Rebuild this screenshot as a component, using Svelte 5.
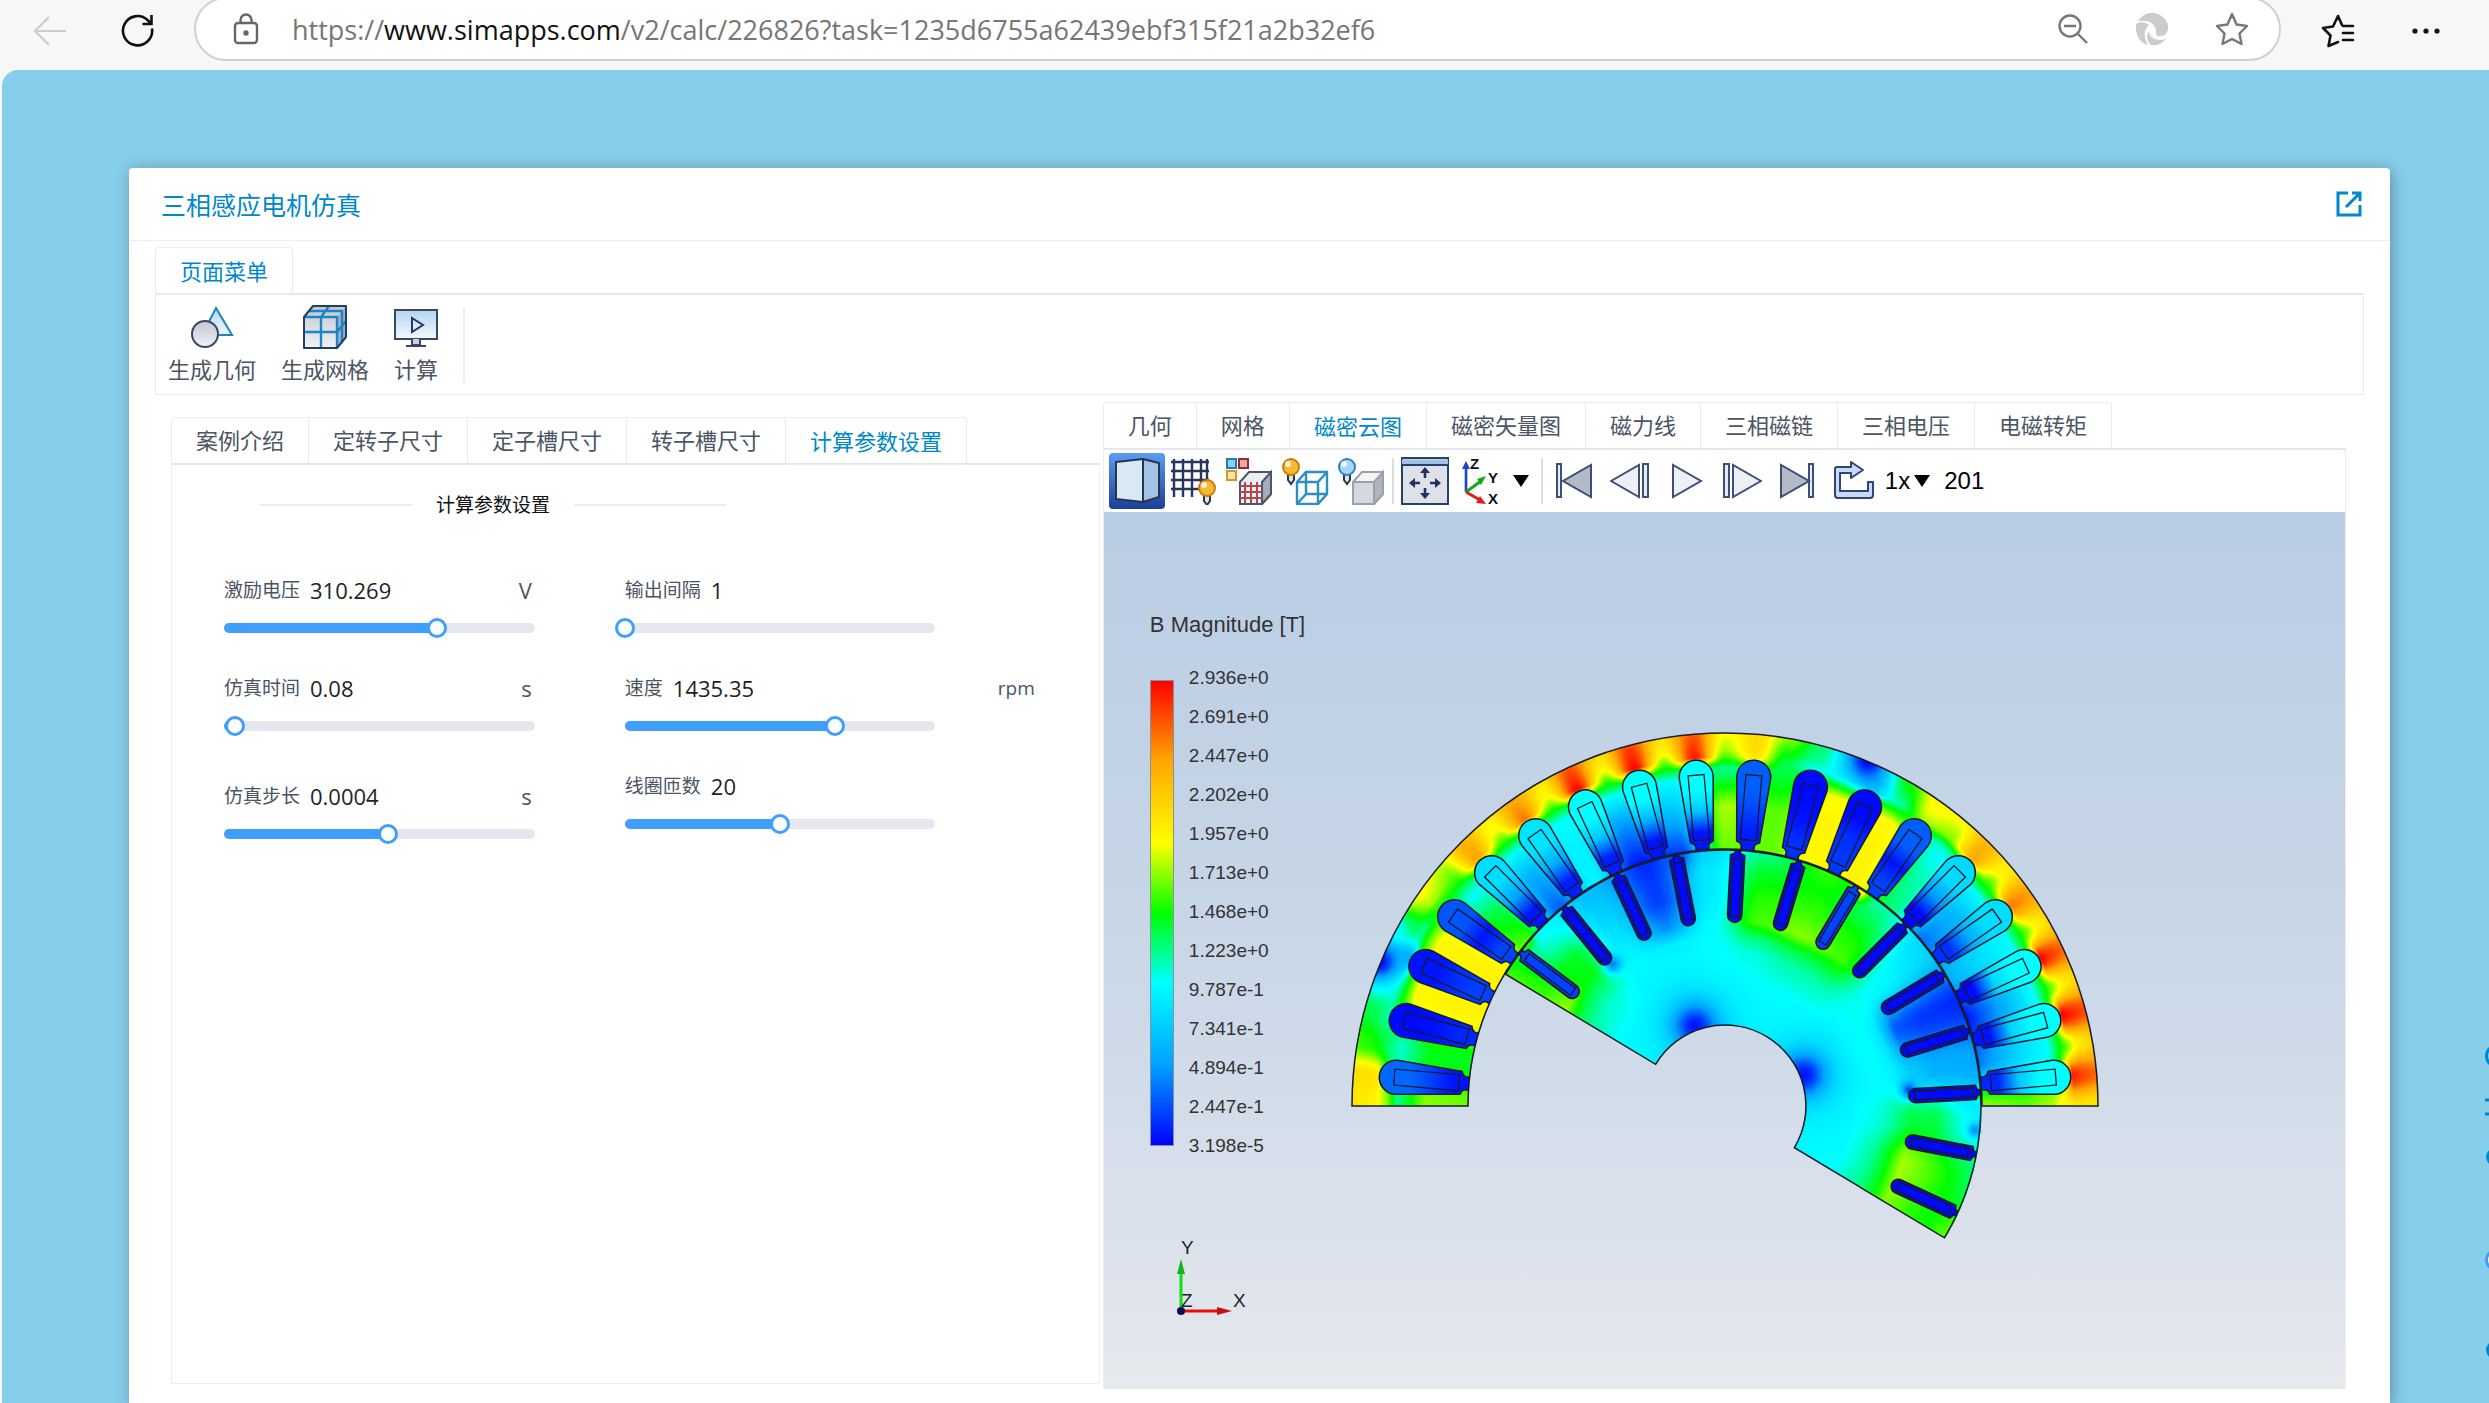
<script>
  const url = { scheme: 'https://', host: 'www.simapps.com', path: '/v2/calc/226826?task=1235d6755a62439ebf315f21a2b32ef6' };

  const paramTabs = ['案例介绍', '定转子尺寸', '定子槽尺寸', '转子槽尺寸', '计算参数设置'];
  const resultTabs = ['几何', '网格', '磁密云图', '磁密矢量图', '磁力线', '三相磁链', '三相电压', '电磁转矩'];

  let activeParamTab = $state('计算参数设置');
  let activeResultTab = $state('磁密云图');

  // pos is the thumb position in percent
  let columns = $state([
    [
      { id: 'voltage', label: '激励电压', value: '310.269', unit: 'V', pos: 68.6 },
      { id: 'time', label: '仿真时间', value: '0.08', unit: 's', pos: 3.4 },
      { id: 'step', label: '仿真步长', value: '0.0004', unit: 's', pos: 52.8 },
    ],
    [
      { id: 'interval', label: '输出间隔', value: '1', unit: '', pos: 0 },
      { id: 'speed', label: '速度', value: '1435.35', unit: 'rpm', pos: 67.8 },
      { id: 'turns', label: '线圈匝数', value: '20', unit: '', pos: 50 },
    ],
  ]);

  const legend = [
    '2.936e+0', '2.691e+0', '2.447e+0', '2.202e+0', '1.957e+0', '1.713e+0', '1.468e+0',
    '1.223e+0', '9.787e-1', '7.341e-1', '4.894e-1', '2.447e-1', '3.198e-5',
  ];

  // Colour map, value 0..1
  const stops = [
    [0, 0, 0, 255],
    [0.17, 0, 160, 255],
    [0.35, 0, 255, 255],
    [0.5, 0, 255, 0],
    [0.65, 255, 255, 0],
    [0.83, 255, 165, 0],
    [1, 255, 0, 0],
  ];

  function ramp(v) {
    const c = Math.min(1, Math.max(0, v));
    let i = 1;
    while (i < stops.length - 1 && c > stops[i][0]) i++;
    const a = stops[i - 1];
    const b = stops[i];
    const t = (c - a[0]) / (b[0] - a[0]);
    return [1, 2, 3].map(k => Math.round(a[k] + (b[k] - a[k]) * t));
  }

  const css = v => `rgb(${ramp(v).join(',')})`;

  // Geometry, centred on the shaft. Angles run clockwise from the left.
  const R_OUT = 373;
  const R_GAP = 257;
  const R_SHAFT = 81;
  const ROTOR_START = 31;
  const ROTOR_PITCH = 14;

  function polar(r, deg) {
    const a = (deg * Math.PI) / 180;
    return `${(-r * Math.cos(a)).toFixed(1)} ${(-r * Math.sin(a)).toFixed(1)}`;
  }

  const statorPath = `M${polar(R_OUT, 0)}A${R_OUT} ${R_OUT} 0 0 1 ${polar(R_OUT, 180)}L${polar(R_GAP, 180)}A${R_GAP} ${R_GAP} 0 0 0 ${polar(R_GAP, 0)}Z`;
  const rotorPath =
    `M${polar(256, ROTOR_START)}A256 256 0 0 1 ${polar(256, 121)}A256 256 0 0 1 ${polar(256, 211)}` +
    `L${polar(R_SHAFT, 211)}A${R_SHAFT} ${R_SHAFT} 0 0 0 ${polar(R_SHAFT, 121)}A${R_SHAFT} ${R_SHAFT} 0 0 0 ${polar(R_SHAFT, ROTOR_START)}Z`;

  // [tip, middle, base] per stator slot
  const statorSlots = [
    [0.11, 0.07, 0.02], [0.01, 0.02, 0.04], [0.02, 0.05, 0.07], [0.09, 0.02, 0.07],
    [0.29, 0.18, 0.02], [0.3, 0.19, 0.03], [0.35, 0.24, 0.03], [0.35, 0.2, 0.02], [0.35, 0.24, 0.02],
    [0.1, 0.07, 0.03], [0.01, 0.02, 0.05], [0.01, 0.05, 0.06], [0.1, 0.02, 0.07],
    [0.28, 0.16, 0.01], [0.29, 0.19, 0.05], [0.35, 0.27, 0.01], [0.35, 0.26, 0.02], [0.35, 0.25, 0.04],
  ].map((v, i) => ({ angle: 5 + i * 10 - 90, v }));

  const rotorSlots = Array.from({ length: 13 }, (_, i) => ({
    angle: 36.9 + i * ROTOR_PITCH - 90,
    color: i === 0 || i === 6 ? css(0.07) : css(0.01),
  }));

  // Flux tables: stator teeth every 10 degrees, yoke every 5, rotor teeth every pitch
  const teeth = [
    { r: 257, v: [0.56, 0.48, 0.67, 0.67, 0.54, 0.1, 0.33, 0.02, 0.06, 0.56, 0.56, 0.66, 0.67, 0.43, 0.12, 0.2, 0.02, 0.12, 0.58] },
    { r: 300, v: [0.58, 0.49, 0.67, 0.67, 0.46, 0.2, 0.33, 0.17, 0.24, 0.6, 0.55, 0.67, 0.67, 0.4, 0.22, 0.3, 0.22, 0.28, 0.55] },
    { r: 328, v: [0.42, 0.38, 0.66, 0.66, 0.35, 0.34, 0.35, 0.34, 0.34, 0.46, 0.48, 0.65, 0.66, 0.35, 0.34, 0.35, 0.35, 0.35, 0.6] },
    { r: 338, v: [0.58, 0.42, 0.52, 0.56, 0.42, 0.46, 0.46, 0.46, 0.46, 0.42, 0.46, 0.52, 0.54, 0.38, 0.48, 0.47, 0.47, 0.48, 0.66] },
  ];
  const yoke = [
    { r: 349, v: [0.67, 0.69, 0.48, 0.4, 0.38, 0.26, 0.42, 0.52, 0.52, 0.82, 0.57, 0.88, 0.58, 1, 0.57, 1, 0.57, 0.98, 0.54, 0.69, 0.46, 0.36, 0.34, 0.26, 0.4, 0.6, 0.57, 0.81, 0.57, 0.87, 0.57, 1, 0.58, 1, 0.58, 0.97, 0.69] },
    { r: 357, v: [0.68, 0.71, 0.51, 0.44, 0.36, 0.24, 0.46, 0.6, 0.56, 0.82, 0.64, 0.86, 0.66, 0.96, 0.66, 0.97, 0.66, 0.95, 0.6, 0.72, 0.5, 0.41, 0.32, 0.24, 0.44, 0.64, 0.6, 0.81, 0.65, 0.86, 0.66, 0.95, 0.67, 0.97, 0.68, 0.94, 0.7] },
    { r: 373, v: [0.7, 0.71, 0.53, 0.47, 0.36, 0.28, 0.52, 0.67, 0.62, 0.8, 0.68, 0.82, 0.7, 0.91, 0.72, 0.93, 0.71, 0.91, 0.65, 0.72, 0.58, 0.44, 0.32, 0.32, 0.52, 0.67, 0.67, 0.79, 0.7, 0.83, 0.72, 0.89, 0.73, 0.92, 0.74, 0.89, 0.69] },
  ];
  const rotorTeeth = [
    { r: 81, v: Array(14).fill(0.34) },
    { r: 125, v: [0.35, 0.35, 0.34, 0.34, 0.35, 0.35, 0.35, 0.35, 0.34, 0.34, 0.34, 0.34, 0.34, 0.35] },
    { r: 155, v: [0.41, 0.38, 0.34, 0.34, 0.35, 0.37, 0.4, 0.4, 0.36, 0.36, 0.35, 0.37, 0.41, 0.42] },
    { r: 170, v: [0.46, 0.43, 0.34, 0.32, 0.35, 0.43, 0.46, 0.46, 0.36, 0.3, 0.33, 0.41, 0.49, 0.48] },
    { r: 186, v: [0.59, 0.49, 0.32, 0.16, 0.34, 0.54, 0.58, 0.54, 0.35, 0.1, 0.26, 0.46, 0.6, 0.58] },
    { r: 212, v: [0.53, 0.48, 0.28, 0.07, 0.31, 0.52, 0.53, 0.51, 0.33, 0.06, 0.2, 0.46, 0.55, 0.52] },
    { r: 235, v: [0.54, 0.38, 0.25, 0.06, 0.31, 0.48, 0.5, 0.45, 0.3, 0.05, 0.2, 0.37, 0.5, 0.5] },
    { r: 256, v: [0.54, 0.33, 0.22, 0.04, 0.27, 0.42, 0.53, 0.4, 0.27, 0.04, 0.18, 0.33, 0.45, 0.56] },
  ];

  // [x, y, radius, value] patches over the base field
  const statorSpots = [
    [-346, -144, 18, 0],
    [143, -346, 20, 0],
    [-330, -180, 14, 0.33],
    [-317, -148, 9, 0.2],
  ];
  const rotorSpots = [
    [-48, -248, 14, 0.08], [-112, -142, 9, 0.14], [-200, -165, 8, 0.6],
    [184, -16, 8, 0.08], [250, 24, 7, 0.16], [252, -12, 6, 0.58], [136, -215, 9, 0.68],
    [-29, -80, 40, 0.24], [-30, -80, 20, 0.02], [79, -32, 38, 0.24], [79, -31, 20, 0.02],
  ];

  // Smooth interpolation along the angle
  function mix(table, f) {
    const c = Math.min(table.length - 1.001, Math.max(0, f));
    const i = Math.floor(c);
    const t = c - i;
    const s = t * t * (3 - 2 * t);
    return table[i] + (table[i + 1] - table[i]) * s;
  }

  // Linear interpolation along the radius
  function between(rows, r) {
    let i = 1;
    while (i < rows.length - 1 && r > rows[i][0]) i++;
    const t = Math.min(1, (r - rows[i - 1][0]) / (rows[i][0] - rows[i - 1][0]));
    return rows[i - 1][1] + (rows[i][1] - rows[i - 1][1]) * t;
  }

  function applySpots(spots, x, y, v) {
    for (const [sx, sy, r, value] of spots) {
      const d = ((x - sx) ** 2 + (y - sy) ** 2) / (r * r);
      if (d < 6) v += (value - v) * Math.exp(-d);
    }
    return v;
  }

  function statorField(x, y, r, deg) {
    const rows = [
      ...teeth.map(row => [row.r, mix(row.v, deg / 10)]),
      ...yoke.map(row => [row.r, mix(row.v, deg / 5)]),
    ];
    return applySpots(statorSpots, x, y, between(rows, r));
  }

  function rotorField(x, y, r, deg) {
    const rows = rotorTeeth.map(row => [row.r, mix(row.v, (deg - 29.9) / ROTOR_PITCH)]);
    return applySpots(rotorSpots, x, y, between(rows, r));
  }

  let canvas;

  $effect(() => {
    const ctx = canvas.getContext('2d');
    const { width, height } = canvas;
    const image = ctx.createImageData(width, height);
    for (let py = 0; py < height; py++) {
      for (let px = 0; px < width; px++) {
        const x = px - 373.5;
        const y = py - 374.5;
        const r = Math.hypot(x, y);
        let deg = (Math.atan2(-y, -x) * 180) / Math.PI;
        if (deg < -90) deg += 360;
        let v = null;
        if (r >= R_GAP && r <= R_OUT && y <= 0) v = statorField(x, y, r, deg);
        else if (r < R_GAP && r >= R_SHAFT && deg >= ROTOR_START && deg <= ROTOR_START + 180) v = rotorField(x, y, r, deg);
        if (v === null) continue;
        const [red, green, blue] = ramp(v);
        image.data.set([red, green, blue, 255], (py * width + px) * 4);
      }
    }
    ctx.putImageData(image, 0, 0);
  });
</script>

{#snippet bulb(x, y, fill)}
  <g transform="translate({x} {y})">
    <path d="M-3 7h6v6l-3 4-3-4z" fill="#dfe3ea" stroke="#26364f" stroke-width="2" />
    <circle r="8" {fill} stroke={fill === '#f7b92f' ? '#c77b12' : '#2b83bd'} stroke-width="2" />
    <circle cx="-3" cy="-3" r="3" fill="#fff" opacity="0.8" />
  </g>
{/snippet}

<div class="window">
  <header class="browser-bar">
    <button class="nav-button" aria-label="Back">
      <svg width="34" height="30" viewBox="0 0 34 30" fill="none" stroke="#ccc" stroke-width="2">
        <path d="M33 15H2M16 1 2 15l14 14" />
      </svg>
    </button>
    <button class="nav-button" aria-label="Reload">
      <svg width="34" height="34" viewBox="0 0 34 34" fill="none" stroke="#111" stroke-width="2.6">
        <path d="M31 14.500A14.600 14.600 0 1 1 26.500 6L30 9.500M30.500 1v9h-9" />
      </svg>
    </button>
    <div class="address">
      <svg width="26" height="32" viewBox="0 0 26 32" fill="none" stroke="#666" stroke-width="2.400">
        <rect x="2" y="10" width="22" height="20" rx="3" />
        <path d="M7.500 10V7a5.500 5.500 0 0 1 11 0v3" />
        <circle cx="13" cy="20" r="1.500" fill="#666" />
      </svg>
      <a class="url" href="#task">{url.scheme}<b>{url.host}</b>{url.path}</a>
      <button class="icon-button" aria-label="Zoom out">
        <svg width="32" height="32" viewBox="0 0 32 32" fill="none" stroke="#777" stroke-width="2.400">
          <circle cx="13" cy="13" r="10.500" />
          <path d="M7 13h12M21 21l9 9" />
        </svg>
      </button>
      <button class="icon-button" aria-label="Extension">
        <svg width="34" height="34" viewBox="0 0 34 34" fill="#ccc">
          <path d="M3 9C8 1 17-1 25 3c7 4 10 11 7 17-1 3-5 5-9 4-1 0-2-1-2-2 1-6-3-12-10-13-3 0-6 0-8 0z" />
          <path d="M1 12c4-3 10-2 13 1-5 4-6 12-1 20-7-1-13-9-12-21z" />
          <path d="M14 19c0 6 6 9 11 9 3 0 5-1 6-2-3 6-9 8-15 7-4-4-5-9-2-14z" />
        </svg>
      </button>
      <button class="icon-button" aria-label="Add to favorites">
        <svg width="34" height="34" viewBox="0 0 34 34" fill="none" stroke="#777" stroke-width="2.400" stroke-linejoin="round">
          <path d="m17 2 4.500 10.500L32 14l-7.500 7.500L26.500 32 17 27l-9.500 5 2-10.500L2 14l10.500-1.500z" />
        </svg>
      </button>
    </div>
    <button class="icon-button favorites" aria-label="Favorites">
      <svg width="34" height="34" viewBox="0 0 34 34" fill="none" stroke="#111" stroke-width="2.600" stroke-linejoin="round" stroke-linecap="round">
        <path d="M22 12h10M22 19h10M22 26h10M17 28l-9.500 4 2-10.500L2 14l10-1.500L17 2l4 9" />
      </svg>
    </button>
    <button class="icon-button" aria-label="More">
      <svg width="34" height="34" viewBox="0 0 34 34" fill="#111">
        <circle cx="6" cy="17" r="2.600" /><circle cx="17" cy="17" r="2.600" /><circle cx="28" cy="17" r="2.600" />
      </svg>
    </button>
  </header>

  <div class="page">
    <main class="card">
      <div class="card-head">
        <h1>三相感应电机仿真</h1>
        <button class="icon-button" aria-label="Open in new window">
          <svg width="26" height="26" viewBox="0 0 26 26" fill="none" stroke="#08c" stroke-width="3">
            <path d="M12 2H2v22h22V14M16 2h8v8M24 2 10 16" />
          </svg>
        </button>
      </div>

      <div class="card-body">
        <nav class="tabs">
          <button class="tab active">页面菜单</button>
        </nav>

        <div class="ribbon">
          <button class="ribbon-item">
            <svg width="44" height="44" viewBox="0 0 44 44">
              <defs>
                <linearGradient id="steel" x2="0" y2="1"><stop stop-color="#c3c7d1" /><stop offset="1" stop-color="#f0f1f4" /></linearGradient>
                <linearGradient id="sky" x2="0" y2="1"><stop stop-color="#b5d5ef" /><stop offset="1" stop-color="#f2f8fd" /></linearGradient>
              </defs>
              <path d="M26 3 42 30H12z" fill="url(#sky)" stroke="#1f84be" stroke-width="2" />
              <circle cx="15" cy="29" r="13" fill="url(#steel)" stroke="#3a4764" stroke-width="2" />
            </svg>
            <span>生成几何</span>
          </button>
          <button class="ribbon-item">
            <svg width="44" height="44" viewBox="0 0 44 44" stroke-linejoin="round">
              <path d="M1 12 10 1h33v31l-9 11H1z" fill="url(#steel)" />
              <path d="M34 12 43 1v31l-9 11z" fill="#9fb0c8" />
              <path d="M18 12v31M1 27h33l9-11M18 12l8-11M6 6h33v31M1 12h33v31" fill="none" stroke="#1c86c2" stroke-width="2.400" />
              <path d="M1 12 10 1h33v31l-9 11H1z" fill="none" stroke="#223e66" stroke-width="2" />
            </svg>
            <span>生成网格</span>
          </button>
          <button class="ribbon-item">
            <svg width="44" height="44" viewBox="0 0 44 44">
              <rect x="1" y="5" width="42" height="29" fill="url(#sky)" stroke="#3a4764" stroke-width="2" />
              <path d="M18 34v6h8v-6M12 41h20" fill="#ccd3de" stroke="#3a4764" stroke-width="2" />
              <path d="M18 13v14l11-7z" fill="none" stroke="#22376a" stroke-width="2" />
            </svg>
            <span>计算</span>
          </button>
          <span class="ribbon-separator"></span>
        </div>

        <div class="split">
          <section class="params">
            <nav class="tabs">
              {#each paramTabs as tab}
                <button class="tab" class:active={tab === activeParamTab} onclick={() => (activeParamTab = tab)}>{tab}</button>
              {/each}
            </nav>
            <div class="params-panel">
              <h2 class="group-title">计算参数设置</h2>
              <div class="param-columns">
                {#each columns as rows}
                  <div class="param-column">
                    {#each rows as row (row.id)}
                      <div class="param">
                        <div class="param-head">
                          <label for={row.id}>{row.label}</label>
                          <span class="param-value">{row.value}</span>
                          <span class="param-unit">{row.unit}</span>
                        </div>
                        <div class="slider">
                          <div class="slider-fill" style="width: {row.pos}%"></div>
                          <input id={row.id} type="range" min="0" max="100" step="0.1" bind:value={row.pos} />
                        </div>
                      </div>
                    {/each}
                  </div>
                {/each}
              </div>
            </div>
          </section>

          <section class="results">
            <nav class="tabs">
              {#each resultTabs as tab}
                <button class="tab" class:active={tab === activeResultTab} onclick={() => (activeResultTab = tab)}>{tab}</button>
              {/each}
            </nav>

            <div class="toolbar">
              <button class="tool selected" aria-label="Solid view">
                <svg width="48" height="48" viewBox="0 0 48 48" stroke="#26364f" stroke-width="2" stroke-linejoin="round">
                  <path d="M3 5 30 2v43L3 42z" fill="#d8e9f5" />
                  <path d="M30 2 46 6v34l-16 5z" fill="#a3c2e4" />
                </svg>
              </button>
              <button class="tool" aria-label="Grid">
                <svg width="48" height="48" viewBox="0 0 48 48">
                  <path d="M2 5h38M2 14h38M2 23h38M2 32h28M5 2v38M14 2v38M23 2v38M32 2v24M38 2v20" stroke="#26365c" stroke-width="2.400" />
                  {@render bulb(38, 31, '#f7b92f')}
                </svg>
              </button>
              <button class="tool" aria-label="Mesh parts">
                <svg width="48" height="48" viewBox="0 0 48 48">
                  <rect x="2" y="2" width="9" height="9" fill="#8fd0f2" stroke="#1b80b8" stroke-width="2" />
                  <rect x="14" y="2" width="9" height="9" fill="#e9a9a9" stroke="#9b2b2b" stroke-width="2" />
                  <rect x="2" y="14" width="9" height="9" fill="#fde9b0" stroke="#dd931c" stroke-width="2" />
                  <path d="m15 25 9-10h22v22l-9 10H15z" fill="#edeff2" stroke="#4b566b" stroke-width="2" />
                  <path d="m37 25 9-10v22l-9 10z" fill="#a6acb8" stroke="#4b566b" stroke-width="2" />
                  <path d="M20 25v21M26 25v21M32 25v21M15 29h22M15 35h22M15 41h22" stroke="#b04a4a" stroke-width="2" />
                </svg>
              </button>
              <button class="tool" aria-label="Wireframe light">
                <svg width="48" height="48" viewBox="0 0 48 48">
                  <path d="m16 25 9-10h21v22l-9 10H16zM16 25h21v22M37 25l9-10M25 15v22h21M25 37l-9 10" fill="none" stroke="#2b8cc6" stroke-width="2.400" />
                  {@render bulb(10, 10, '#f7b92f')}
                </svg>
              </button>
              <button class="tool" aria-label="Surface light">
                <svg width="48" height="48" viewBox="0 0 48 48">
                  <path d="m16 25 9-10h21v22l-9 10H16z" fill="#f4f4f6" stroke="#9ba1aa" stroke-width="2" />
                  <path d="M16 25h21v22H16z" fill="#d5d8e0" stroke="#9ba1aa" stroke-width="2" />
                  <path d="m37 25 9-10v22l-9 10z" fill="#b0b4bc" stroke="#9ba1aa" stroke-width="2" />
                  {@render bulb(10, 10, '#a9d4f3')}
                </svg>
              </button>
              <span class="tool-separator"></span>
              <button class="tool" aria-label="Fit view">
                <svg width="48" height="48" viewBox="0 0 48 48">
                  <rect x="1" y="1" width="46" height="46" fill="#dfe1e8" stroke="#26416f" stroke-width="2" />
                  <path d="M1 5h46" stroke="#9fc2e2" stroke-width="5" /><path d="M1 8h46" stroke="#26416f" stroke-width="2" />
                  <path d="M24 12v9M24 31v9M10 26h9M29 26h9" stroke="#1f3260" stroke-width="2.600" />
                  <path d="m24 10 5 6H19zM24 42l5-6H19zM8 26l6-5v10zM40 26l-6-5v10z" fill="#1f3260" />
                </svg>
              </button>
              <button class="tool" aria-label="View axes">
                <svg class="axes" width="52" height="52" viewBox="0 -2 52 52">
                  <path d="M11 35V10" stroke="#1c3fd8" stroke-width="2.600" /><path d="m11 4 4 8H7z" fill="#1c3fd8" />
                  <path d="m11 35 15-11" stroke="#0cae16" stroke-width="3" /><path d="m31 19-5 9-4-6z" fill="#0cae16" />
                  <path d="m11 35 14 8" stroke="#e01d1d" stroke-width="3" /><path d="m31 47-10-1 4-7z" fill="#e01d1d" />
                  <text x="15" y="12">Z</text><text x="33" y="26">Y</text><text x="33" y="47">X</text>
                </svg>
              </button>
              <button class="caret" aria-label="Choose view"></button>
              <span class="tool-separator"></span>
              <button class="tool" aria-label="First frame">
                <svg width="40" height="40" viewBox="0 0 40 40" stroke="#3b4f77" stroke-width="2">
                  <path d="M3 3h4v33H3z" fill="#e6edf6" /><path d="M37 4v32L9 20z" fill="#b4bac6" />
                </svg>
              </button>
              <button class="tool" aria-label="Previous frame">
                <svg width="40" height="40" viewBox="0 0 40 40" stroke="#3b4f77" stroke-width="2">
                  <path d="M33 3h5v33h-5z" fill="#e6edf6" /><path d="M29 4v32L1 20z" fill="#edeff4" />
                </svg>
              </button>
              <button class="tool" aria-label="Play">
                <svg width="40" height="40" viewBox="0 0 40 40" stroke="#3b4f77" stroke-width="2">
                  <path d="M7 4v32l28-16z" fill="#edf0f5" />
                </svg>
              </button>
              <button class="tool" aria-label="Next frame">
                <svg width="40" height="40" viewBox="0 0 40 40" stroke="#3b4f77" stroke-width="2">
                  <path d="M2 3h5v33H2z" fill="#e6edf6" /><path d="M11 4v32l28-16z" fill="#edeff4" />
                </svg>
              </button>
              <button class="tool" aria-label="Last frame">
                <svg width="40" height="40" viewBox="0 0 40 40" stroke="#3b4f77" stroke-width="2">
                  <path d="M31 3h4v33h-4z" fill="#e6edf6" /><path d="M3 4v32l28-16z" fill="#b4bac6" />
                </svg>
              </button>
              <button class="tool" aria-label="Loop">
                <svg width="40" height="40" viewBox="0 0 40 40" stroke="#2d4676" stroke-width="2" stroke-linejoin="round">
                  <path d="M1 8q0-2 2-2h14V1l12 8-12 8v-5H6v18h28V21h5v13q0 3-3 3H4q-3 0-3-3z" fill="#c7dcf3" />
                </svg>
              </button>
              <button class="speed">1x<i></i></button>
              <span class="frame-count">201</span>
            </div>

            <div class="viewport">
              <div class="side">
                <h3>B Magnitude [T]</h3>
                <div class="legend">
                  <div class="legend-bar"></div>
                  <ul>
                    {#each legend as label}
                      <li>{label}</li>
                    {/each}
                  </ul>
                </div>
                <svg class="triad" width="90" height="92" viewBox="0 -12 90 92">
                  <path d="M21 67V22" stroke="#0ce010" stroke-width="3" /><path d="m21 15 4 15h-8z" fill="#14b41c" />
                  <path d="M21 67h42" stroke="#e80c0c" stroke-width="3" /><path d="m72 67-15 4v-8z" fill="#c81010" />
                  <circle cx="21" cy="67" r="4" fill="#0a0a50" />
                  <text x="21" y="10">Y</text><text x="21" y="63">Z</text><text x="73" y="63">X</text>
                </svg>
              </div>

              <div class="model">
                <canvas bind:this={canvas} width="748" height="510"></canvas>
                <svg width="748" height="510" viewBox="-374 -375 748 510" fill="none" stroke="#1a1a28" stroke-width="1.500">
                  <defs>
                    {#each statorSlots as slot, i}
                      <linearGradient id="slot{i}" gradientUnits="userSpaceOnUse" x1="0" y1="-346" x2="0" y2="-262">
                        <stop stop-color={css(slot.v[0])} />
                        <stop offset="0.35" stop-color={css(slot.v[0])} />
                        <stop offset="0.6" stop-color={css(slot.v[1])} />
                        <stop offset="0.85" stop-color={css(slot.v[2])} />
                      </linearGradient>
                    {/each}
                  </defs>
                  {#each statorSlots as slot, i}
                    <g transform="rotate({slot.angle})">
                      <path
                        d="M-6.500-257v-4q-1-3-5-4l-5.500-65a17 17 0 0 1 34 0l-5.500 65q-4 1-5 4v4"
                        fill="url(#slot{i})"
                      />
                      <path d="M-8-332H8v65H-8z" stroke-width="1.300" />
                    </g>
                  {/each}
                  {#each rotorSlots as slot}
                    <g transform="rotate({slot.angle})" stroke-width="1.800">
                      <path d="M-2.500-256v3l-4.500 2v60a7 7 0 0 0 14 0v-60l-4.500-2v-3" fill={slot.color} />
                      <path d="M-4.300-248h8.600v58h-8.600z" stroke-width="1.300" />
                    </g>
                  {/each}
                  <path d={statorPath} />
                  <path d={rotorPath} />
                </svg>
              </div>
            </div>
          </section>
        </div>
      </div>
    </main>

    <svg class="rail" width="4" height="320" viewBox="0 0 4 320" fill="none">
      <circle cx="12" cy="16" r="10.500" stroke="#08c" stroke-width="3" />
      <path d="M0 60h4M0 74h4" stroke="#08c" stroke-width="3" />
      <circle cx="10" cy="117" r="9" fill="#08c" />
      <circle cx="11" cy="220" r="9.500" fill="#fff" stroke="#409eff" stroke-width="3" />
      <circle cx="10" cy="310" r="9" fill="#08c" />
    </svg>
  </div>
</div>

<style>
  :global(body) {
    margin: 0;
  }

  .window {
    min-height: 100vh;
    display: flex;
    flex-direction: column;
    overflow: hidden;
    background: #f7f7f7;
    font-family: "Open Sans", "Noto Sans CJK SC", sans-serif;
    font-size: 22px;
    color: #4b5563;
  }

  button {
    padding: 0;
    border: none;
    background: none;
    font: inherit;
    color: inherit;
    cursor: pointer;
  }

  svg {
    display: block;
    flex-shrink: 0;
  }

  /* Browser bar */
  .browser-bar {
    display: flex;
    align-items: center;
    height: 62px;
    padding: 0 46px 8px 33px;
  }

  .nav-button {
    margin-right: 54px;
  }

  .nav-button + .nav-button {
    margin-right: 39px;
  }

  .address {
    flex: 1;
    display: flex;
    align-items: center;
    gap: 46px;
    height: 64px;
    box-sizing: border-box;
    margin-top: -4px;
    padding: 0 30px 0 37px;
    border: 2px solid #d0d0d0;
    border-radius: 32px;
    background: #fff;
  }

  .url {
    flex: 1;
    margin-left: -13px;
    font-size: 27px;
    color: #767676;
    text-decoration: none;
    white-space: nowrap;
  }

  .url b {
    font-weight: 400;
    color: #111;
  }

  .favorites {
    margin: 0 54px 0 40px;
  }

  /* Page */
  .page {
    position: relative;
    flex: 1;
    display: flex;
    margin-left: 2px;
    padding: 98px 99px 0 127px;
    background: #87ceeb;
    border-top-left-radius: 16px;
  }

  .rail {
    position: absolute;
    right: 0;
    top: 970px;
  }

  .card {
    flex: 1;
    min-width: 0;
    display: flex;
    flex-direction: column;
    background: #fff;
    border-radius: 4px 4px 0 0;
    box-shadow: 2px 2px 16px rgba(0, 0, 0, 0.3);
  }

  .card-head {
    display: flex;
    align-items: center;
    justify-content: space-between;
    height: 72px;
    padding: 0 28px 0 32px;
    border-bottom: 1px solid #ebeef5;
  }

  h1 {
    margin: 0;
    font-size: 25px;
    font-weight: 400;
    color: #08c;
  }

  .card-body {
    flex: 1;
    display: flex;
    flex-direction: column;
    padding: 6px 26px 14px;
  }

  .tabs {
    display: flex;
    height: 48px;
    box-sizing: border-box;
    border-bottom: 2px solid #e4e7ed;
  }

  .tab {
    height: 48px;
    box-sizing: border-box;
    padding: 0 24px;
    border: 1px solid #e9ebf0;
    border-left: none;
    border-bottom: 2px solid #e4e7ed;
    line-height: 45px;
    white-space: nowrap;
  }

  .tab:first-child {
    border-left: 1px solid #e9ebf0;
    border-top-left-radius: 4px;
  }

  .tab:last-child {
    border-top-right-radius: 4px;
  }

  .tab.active {
    border-bottom: 1px solid #e9ebf0;
    color: #08c;
  }

  .ribbon {
    display: flex;
    align-items: center;
    gap: 25px;
    height: 99px;
    padding-left: 12px;
    border: 1px solid #e9ebf0;
    border-top: none;
  }

  .ribbon-item {
    display: flex;
    flex-direction: column;
    align-items: center;
    gap: 4px;
    line-height: 32px;
  }

  .ribbon-separator {
    height: 76px;
    border-left: 2px solid #ebedf1;
  }

  .split {
    flex: 1;
    display: grid;
    grid-template-columns: 928fr 1242fr;
    gap: 3px;
    padding: 7px 18px 0 16px;
  }

  /* Parameters */
  .params {
    display: flex;
    flex-direction: column;
    min-width: 0;
    padding: 15px 0 5px;
  }

  .params-panel {
    flex: 1;
    padding: 24px 61px 0 52px;
    border: 1px solid #ebedf1;
    border-top: none;
  }

  .group-title {
    display: flex;
    align-items: center;
    gap: 24px;
    width: 466px;
    margin: 0 0 54px 36px;
    font-size: 19px;
    font-weight: 400;
    line-height: 32px;
    color: #111;
  }

  .group-title::before,
  .group-title::after {
    content: "";
    flex: 1;
    height: 2px;
    background: #ebedf1;
  }

  .param-columns {
    display: grid;
    grid-template-columns: 310fr 412fr;
    gap: 90px;
  }

  .param {
    margin-bottom: 40px;
  }

  .param-column:first-child .param:last-child {
    margin-top: 50px;
  }

  .param-head {
    display: flex;
    align-items: center;
    gap: 10px;
    margin-bottom: 18px;
    line-height: 30px;
  }

  .param-head label {
    font-size: 19px;
  }

  .param-value {
    color: #1f2329;
  }

  .param-unit {
    margin-left: auto;
    padding-right: 3px;
  }

  .param-column:last-child .param-unit {
    font-size: 19px;
  }

  .slider {
    position: relative;
    height: 10px;
    border-radius: 5px;
    background: #e4e7ed;
  }

  .param-column:last-child .slider {
    width: 75%;
  }

  .slider-fill {
    height: 100%;
    border-radius: 5px 0 0 5px;
    background: #409eff;
  }

  .slider input {
    position: absolute;
    top: -5px;
    left: -10px;
    width: calc(100% + 20px);
    height: 20px;
    margin: 0;
    appearance: none;
    background: none;
  }

  .slider input::-webkit-slider-thumb {
    appearance: none;
    width: 20px;
    height: 20px;
    box-sizing: border-box;
    border: 3px solid #409eff;
    border-radius: 50%;
    background: #fff;
  }

  /* Results */
  .results {
    display: flex;
    flex-direction: column;
    min-width: 0;
  }

  .toolbar {
    display: flex;
    align-items: center;
    height: 62px;
    padding-left: 5px;
    border: 1px solid #ebedf1;
    border-width: 0 1px;
  }

  .tool {
    display: flex;
    align-items: center;
    justify-content: center;
    width: 56px;
    height: 56px;
  }

  .tool.selected {
    border-radius: 4px;
    background: linear-gradient(#5b9cf5, #1d3f96);
  }

  .tool-separator {
    height: 46px;
    margin: 0 3px;
    border-left: 2px solid #dcdcdc;
  }

  .axes text {
    font: bold 15px "Liberation Sans", sans-serif;
    fill: #111;
  }

  .caret {
    display: flex;
    align-items: center;
    height: 56px;
    padding: 0 9px 0 4px;
  }

  .caret::after,
  .speed i {
    content: "";
    border: 8px solid transparent;
    border-top: 12px solid #000;
    border-bottom: none;
  }

  .speed {
    display: flex;
    align-items: center;
    gap: 4px;
    margin: 0 14px 0 3px;
  }

  .speed,
  .frame-count {
    font-family: "Liberation Sans", sans-serif;
    font-size: 24px;
    color: #000;
  }

  .viewport {
    flex: 1;
    display: flex;
    align-items: flex-start;
    background: linear-gradient(#b9cde4, #c9d7e7 50%, #dfe4ed 90%, #e7eaed);
    border: 1px solid #ebedf1;
    border-width: 0 1px;
    font-family: "Liberation Sans", sans-serif;
    color: #333;
  }

  .side {
    width: 247px;
    box-sizing: border-box;
    padding: 98px 0 0 46px;
  }

  .side h3 {
    margin: 0 0 18px;
    font-size: 22px;
    font-weight: 400;
    line-height: 30px;
    white-space: nowrap;
  }

  .legend {
    display: flex;
    gap: 15px;
  }

  .legend-bar {
    width: 24px;
    box-sizing: border-box;
    margin: 22px 0 19px;
    border: 1px solid #8a8fa0;
    background: linear-gradient(#f00, #ffa500 17%, #ff0 35%, #0f0 50%, #0ff 65%, #00a0ff 83%, #00f);
  }

  .legend ul {
    margin: 0;
    padding: 0;
    list-style: none;
    font-size: 19px;
    line-height: 39px;
  }

  .triad {
    margin: 67px 0 0 10px;
  }

  .triad text {
    font-size: 19px;
    fill: #222;
  }

  .model {
    position: relative;
    flex-shrink: 0;
    margin-top: 219px;
  }

  .model canvas {
    display: block;
  }

  .model svg {
    position: absolute;
    top: 0;
    left: 0;
  }
</style>
